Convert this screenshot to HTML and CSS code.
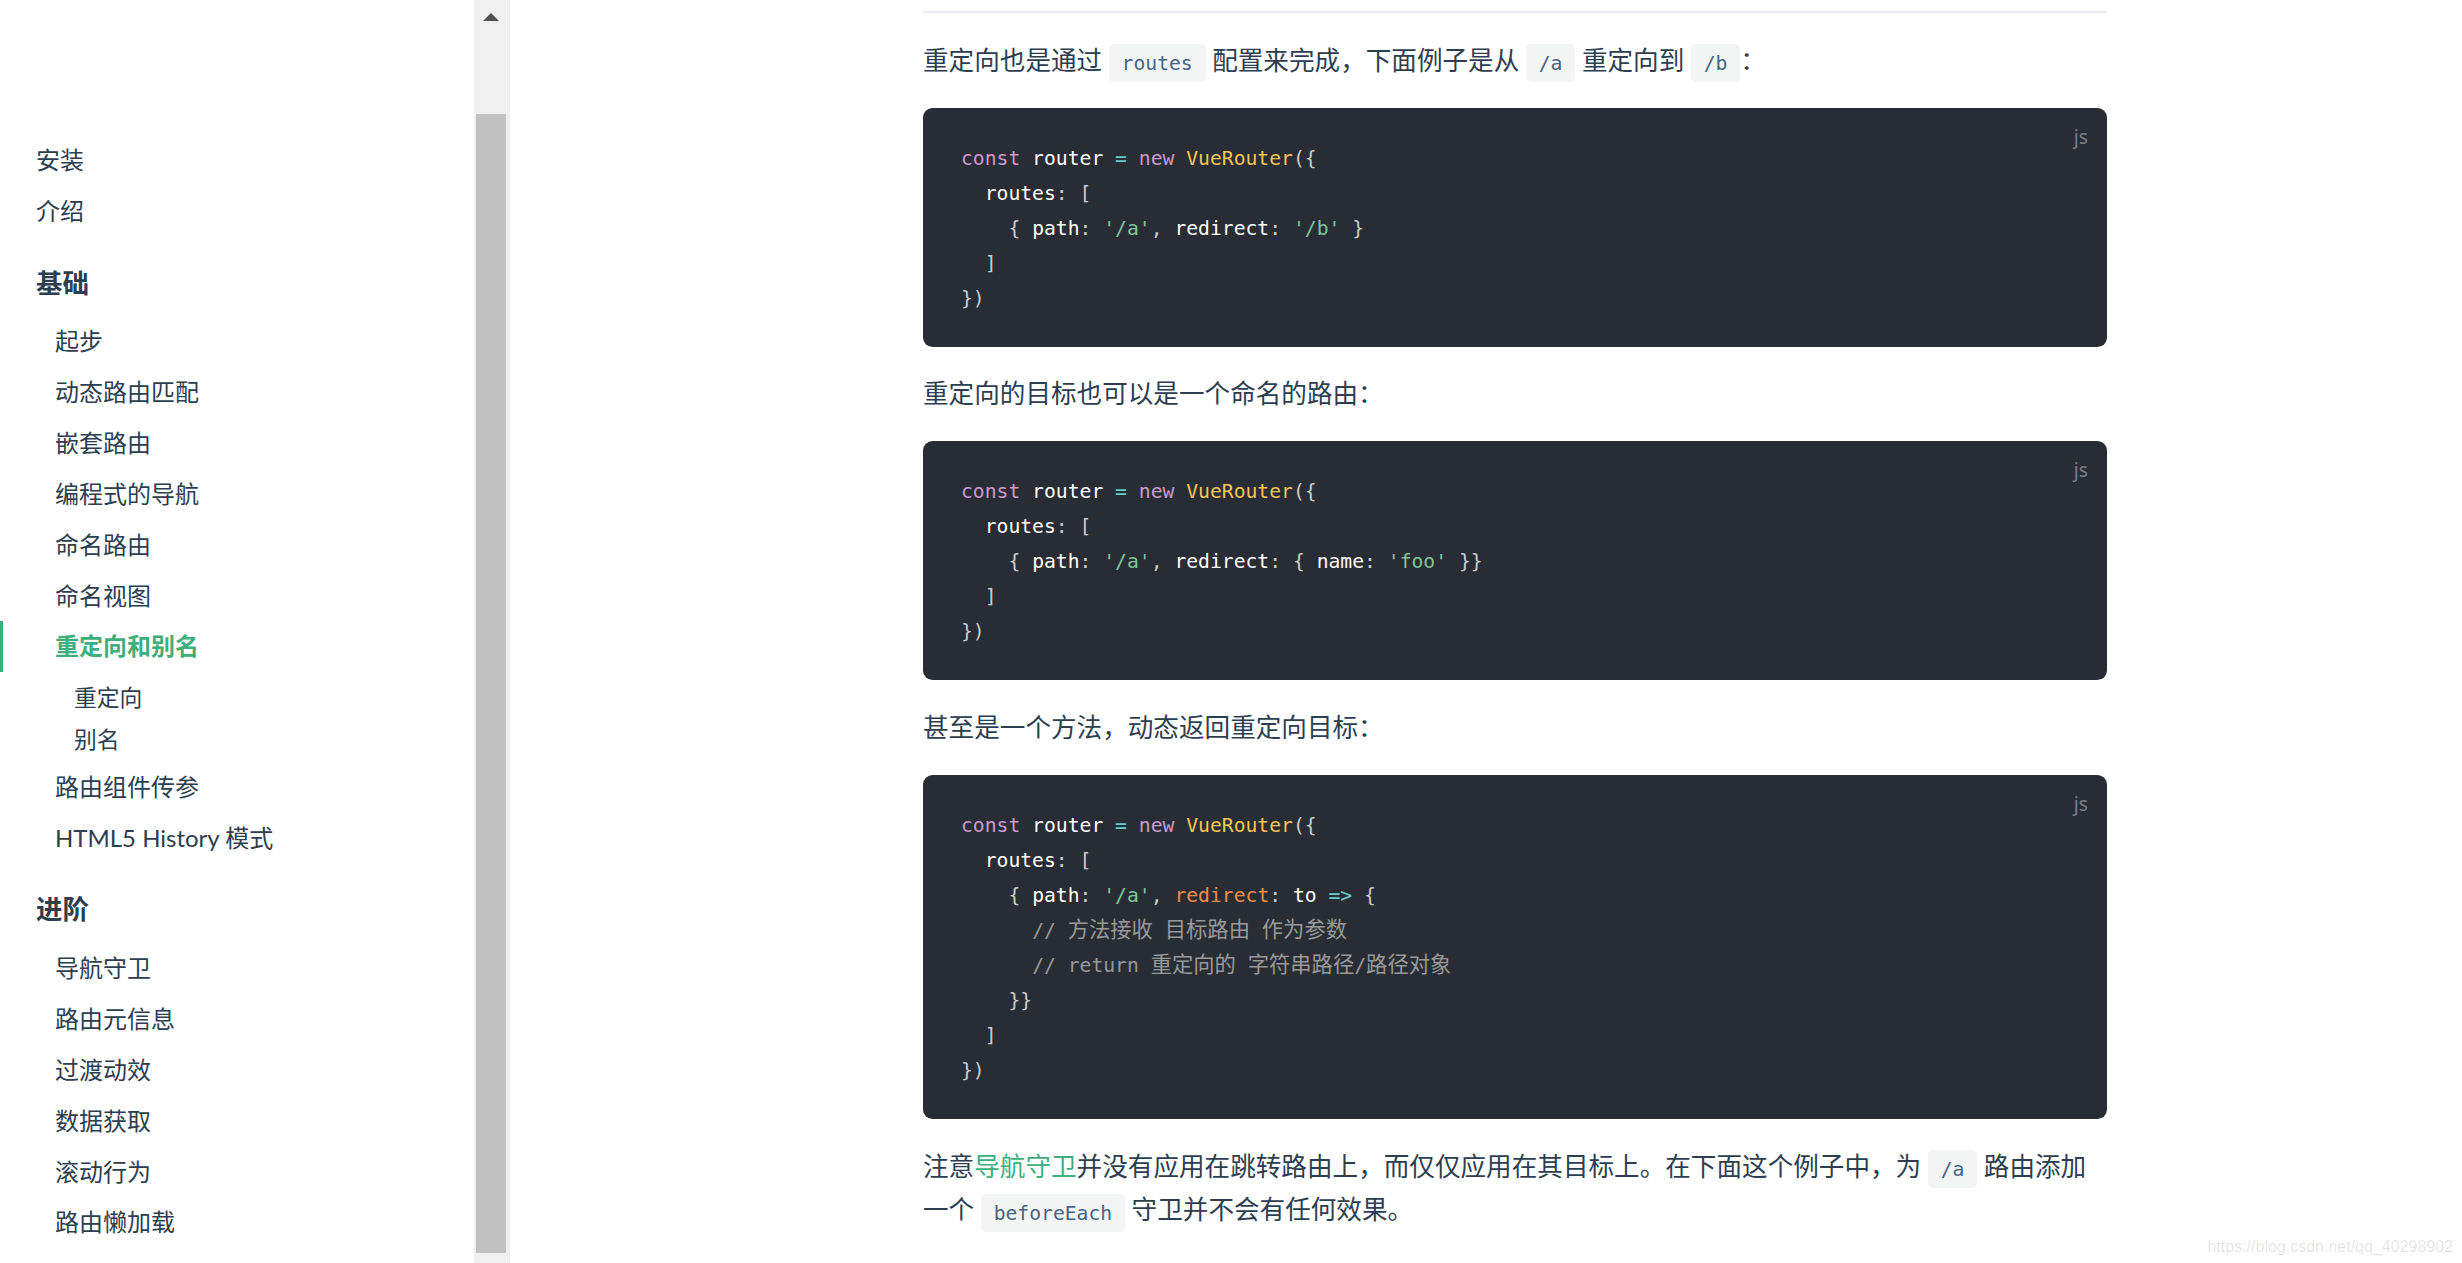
FILE: index.html
```html
<!DOCTYPE html>
<html lang="zh-CN">
<head>
<meta charset="utf-8">
<title>重定向和别名 | Vue Router</title>
<link rel="stylesheet" href="styles.css">
</head>
<body>
<div class="layout">
  <aside class="sidebar">
    <nav class="sidebar-nav">
      <ul class="links">
        <li><a class="link">安装</a></li>
        <li><a class="link">介绍</a></li>
        <li class="group">
          <p class="group-heading">基础</p>
          <ul class="group-links">
            <li><a class="link">起步</a></li>
            <li><a class="link">动态路由匹配</a></li>
            <li><a class="link">嵌套路由</a></li>
            <li><a class="link">编程式的导航</a></li>
            <li><a class="link">命名路由</a></li>
            <li><a class="link">命名视图</a></li>
            <li>
              <a class="link active">重定向和别名</a>
              <ul class="sub-links">
                <li><a class="sub-link">重定向</a></li>
                <li><a class="sub-link">别名</a></li>
              </ul>
            </li>
            <li><a class="link">路由组件传参</a></li>
            <li><a class="link">HTML5 History 模式</a></li>
          </ul>
        </li>
        <li class="group">
          <p class="group-heading">进阶</p>
          <ul class="group-links">
            <li><a class="link">导航守卫</a></li>
            <li><a class="link">路由元信息</a></li>
            <li><a class="link">过渡动效</a></li>
            <li><a class="link">数据获取</a></li>
            <li><a class="link">滚动行为</a></li>
            <li><a class="link">路由懒加载</a></li>
          </ul>
        </li>
      </ul>
    </nav>
    <div class="scrollbar">
      <div class="scroll-up"><span class="scroll-arrow"></span></div>
      <div class="scroll-thumb"></div>
    </div>
  </aside>

  <main class="main">
    <div class="content">
      <div class="heading-rule"></div>

      <p class="text">重定向也是通过 <code class="inline-code">routes</code> 配置来完成，下面例子是从 <code class="inline-code">/a</code> 重定向到 <code class="inline-code">/b</code>：</p>

      <div class="code-block">
        <span class="lang">js</span>
<pre><code><span class="kw">const</span> router <span class="op">=</span> <span class="kw">new</span> <span class="cls">VueRouter</span><span class="pu">({</span>
  routes<span class="pu">:</span> <span class="pu">[</span>
    <span class="pu">{</span> path<span class="pu">:</span> <span class="str">'/a'</span><span class="pu">,</span> redirect<span class="pu">:</span> <span class="str">'/b'</span> <span class="pu">}</span>
  <span class="pu">]</span>
<span class="pu">})</span></code></pre>
      </div>

      <p class="text">重定向的目标也可以是一个命名的路由：</p>

      <div class="code-block">
        <span class="lang">js</span>
<pre><code><span class="kw">const</span> router <span class="op">=</span> <span class="kw">new</span> <span class="cls">VueRouter</span><span class="pu">({</span>
  routes<span class="pu">:</span> <span class="pu">[</span>
    <span class="pu">{</span> path<span class="pu">:</span> <span class="str">'/a'</span><span class="pu">,</span> redirect<span class="pu">:</span> <span class="pu">{</span> name<span class="pu">:</span> <span class="str">'foo'</span> <span class="pu">}}</span>
  <span class="pu">]</span>
<span class="pu">})</span></code></pre>
      </div>

      <p class="text">甚至是一个方法，动态返回重定向目标：</p>

      <div class="code-block">
        <span class="lang">js</span>
<pre><code><span class="kw">const</span> router <span class="op">=</span> <span class="kw">new</span> <span class="cls">VueRouter</span><span class="pu">({</span>
  routes<span class="pu">:</span> <span class="pu">[</span>
    <span class="pu">{</span> path<span class="pu">:</span> <span class="str">'/a'</span><span class="pu">,</span> <span class="fn">redirect</span><span class="pu">:</span> to <span class="op">=&gt;</span> <span class="pu">{</span>
      <span class="cm">// <span class="cjk">方法接收</span> <span class="cjk">目标路由</span> <span class="cjk">作为参数</span></span>
      <span class="cm">// return <span class="cjk">重定向的</span> <span class="cjk">字符串路径</span>/<span class="cjk">路径对象</span></span>
    <span class="pu">}}</span>
  <span class="pu">]</span>
<span class="pu">})</span></code></pre>
      </div>

      <p class="text">注意<a class="text-link">导航守卫</a>并没有应用在跳转路由上，而仅仅应用在其目标上。在下面这个例子中，为 <code class="inline-code">/a</code> 路由添加一个 <code class="inline-code">beforeEach</code> 守卫并不会有任何效果。</p>
    </div>
  </main>
</div>
<div class="watermark">https://blog.csdn.net/qq_40298902</div>
</body>
</html>
```

FILE: styles.css
```css
html,
body {
  margin: 0;
  padding: 0;
  height: 1263px;
  overflow: hidden;
  background: #ffffff;
}

body {
  position: relative;
  font-family: "Noto Sans", "Noto Sans CJK SC", sans-serif;
  color: #2c3e50;
}

ul {
  list-style: none;
  margin: 0;
  padding: 0;
}

/* ---------- layout ---------- */
.layout {
  display: flex;
  height: 1263px;
}

/* ---------- sidebar ---------- */
.sidebar {
  flex: none;
  display: flex;
  width: 510px;
  height: 1263px;
  box-sizing: border-box;
  border-right: 1px solid #eaecef;
  font-family: "Lato", "Noto Sans CJK SC", sans-serif;
}

.sidebar-nav {
  flex: none;
  width: 474px;
  padding-top: 135px;
  box-sizing: border-box;
}

.link {
  display: block;
  font-size: 24px;
  line-height: 50.85px;
  padding-left: 33px;
  border-left: 3px solid transparent;
  color: #2c3e50;
  text-decoration: none;
  white-space: nowrap;
}

.group-links .link {
  padding-left: 52px;
}

.link.active {
  color: #3eaf7c;
  font-weight: 700;
  border-left-color: #3eaf7c;
}

.sub-links {
  padding: 4px 0 1.5px;
}

.sub-link {
  display: block;
  font-size: 22.8px;
  line-height: 42px;
  padding-left: 74px;
  color: #2c3e50;
}

.group-heading {
  margin: 0;
  padding: 29px 0 16.7px 36px;
  font-size: 26.4px;
  line-height: 34px;
  font-weight: 700;
  color: #2c3e50;
}

/* window scrollbar of the sidebar */
.scrollbar {
  flex: none;
  width: 35px;
  background: #f0f0f0;
  display: flex;
  flex-direction: column;
}

.scroll-up {
  height: 34px;
  width: 34px;
  box-sizing: border-box;
  padding-top: 13px;
  display: flex;
  justify-content: center;
}

.scroll-arrow {
  width: 0;
  height: 0;
  border-left: 8px solid transparent;
  border-right: 8px solid transparent;
  border-bottom: 8px solid #505050;
}

.scroll-thumb {
  margin-top: 80px;
  margin-left: 2px;
  width: 30px;
  height: 1139px;
  background: #c1c1c1;
}

/* ---------- main content ---------- */
.main {
  flex: 1;
  padding-left: 413px;
}

.content {
  width: 1184px;
}

.heading-rule {
  height: 11px;
  border-bottom: 2px solid #eaecef;
}

.text {
  margin: 25.6px 0;
  font-size: 25.6px;
  line-height: 43.5px;
  color: #2c3e50;
}

.text-link {
  color: #3eaf7c;
  text-decoration: none;
}

.inline-code {
  font-family: "DejaVu Sans Mono", "Noto Sans CJK SC", monospace;
  font-size: 19.7px;
  line-height: 1;
  padding: 7.6px 12.8px;
  margin: 0;
  border-radius: 4.8px;
  background: rgba(27, 31, 35, 0.05);
  color: #476582;
}

.code-block {
  position: relative;
  margin: 25.6px 0;
  background: #282c34;
  border-radius: 9.6px;
}

.code-block pre {
  margin: 0;
  padding: 33px 38px 31px;
  font-family: "DejaVu Sans Mono", "Noto Sans CJK SC", monospace;
  font-size: 19.7px;
  line-height: 35px;
  color: #ffffff;
  white-space: pre;
}

.lang {
  position: absolute;
  top: 17px;
  right: 19px;
  font-family: "Noto Sans", sans-serif;
  font-size: 19.2px;
  line-height: 23px;
  color: rgba(255, 255, 255, 0.4);
}

.kw { color: #cc99cd; }
.op { color: #67cdcc; }
.cls { color: #f8c555; }
.str { color: #7ec699; }
.fn { color: #f08d49; }
.cm { color: #999999; }
.pu { color: #cccccc; }

.cjk {
  font-family: "Noto Sans CJK SC", sans-serif;
  font-size: 21.3px;
  line-height: 1;
}

/* ---------- watermark ---------- */
.watermark {
  position: absolute;
  right: 9px;
  bottom: 7px;
  font-family: "Liberation Sans", sans-serif;
  font-size: 16px;
  color: rgba(0, 0, 0, 0.12);
}
```
